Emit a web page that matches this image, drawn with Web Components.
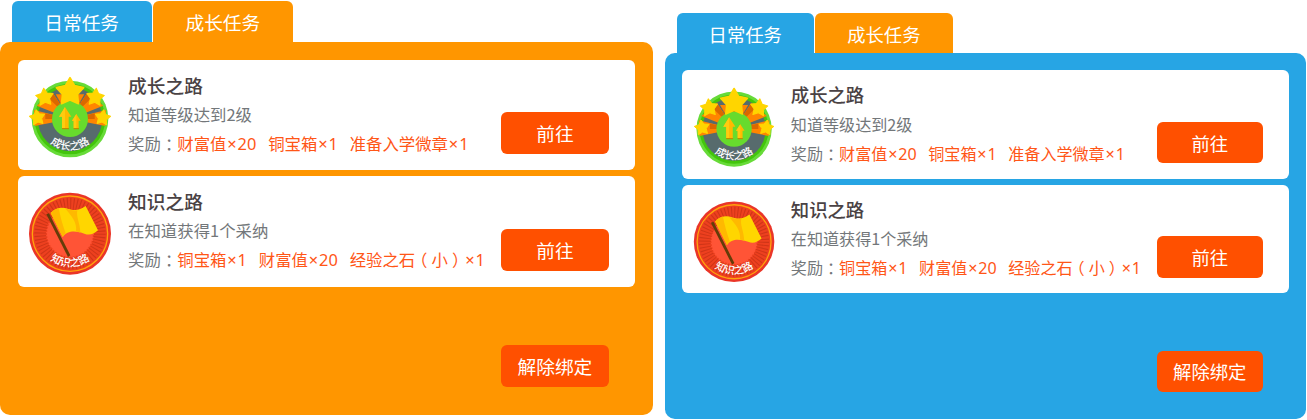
<!DOCTYPE html>
<html lang="zh-CN">
<head>
<meta charset="utf-8">
<title>任务</title>
<style>
body{margin:0;background:#fff;font-family:"Noto Sans CJK SC",sans-serif;width:1307px;height:420px;overflow:hidden}
main{display:flex;align-items:flex-start;gap:12.3px}
.daily{--u:.9816px;--theme:#27a5e4;margin-top:13px}
.growth{--u:1px;--theme:#ff9600;margin-top:1px}
</style>
</head>
<body>
<main>
  <task-board class="growth"></task-board>
  <task-board class="daily"></task-board>
</main>
<script>
function define(name, html) {
  const t = document.createElement('template');
  t.innerHTML = html;
  customElements.define(name, class extends HTMLElement {
    constructor() {
      super();
      this.attachShadow({mode: 'open'}).append(t.content.cloneNode(true));
    }
  });
}

define('task-tab', `
<style>
:host{display:flex;justify-content:center;align-items:center;box-sizing:border-box;width:calc(140*var(--u));height:calc(41*var(--u));padding-top:calc(1.4*var(--u));border-radius:calc(6*var(--u)) calc(6*var(--u)) 0 0;background:#27a5e4;color:#fff;font-size:calc(18.7*var(--u));line-height:1}
:host([kind=growth]){background:#ff9600}
</style><slot></slot>`);

define('task-button', `
<style>
:host{display:block;flex:none}
button{display:flex;align-items:center;justify-content:center;width:calc(107.4*var(--u));height:calc(42*var(--u));padding:calc(1*var(--u)) 0 0;border:0;border-radius:calc(6*var(--u));background:#ff5000;color:#fff;font-family:inherit;font-size:calc(18.7*var(--u));line-height:1}
</style><button><slot></slot></button>`);

define('reward-item', `
<style>
:host{display:block;white-space:nowrap;color:#ff5617}
.x{display:inline-block;width:.68em;text-align:center;font-family:"Noto Sans",sans-serif}
.n{font-family:"Noto Sans",sans-serif}
</style><slot></slot><span class="x">×</span><span class="n"><slot name="count"></slot></span>`);

define('growth-badge', `
<style>:host,svg{display:block}svg{width:calc(100*var(--u));height:calc(100*var(--u))}</style>
<svg viewBox="0 0 300 300">
  <defs>
    <path id="star" d="M0-10 3.2-4.4 9.5-3.1 5.2 1.7 5.9 8.1 0 5.5-5.9 8.1-5.2 1.7-9.5-3.1-3.2-4.4Z" stroke-width="1.2" stroke-linejoin="round"/>
    <path id="arc" d="M58 148A92 92 0 0 0 242 148"/>
  </defs>
  <circle cx="150" cy="147" r="115" fill="#67db38"/>
  <circle cx="150" cy="147" r="106" fill="#43c50c"/>
  <circle cx="150" cy="147" r="97" fill="#576b6d"/>
  <g fill="#ff8500">
    <path d="M150 147 107 73 193 73Z"/>
    <path d="M150 147 50 107 98 68Z"/>
    <path d="M150 147 202 68 250 107Z"/>
    <path d="M150 147 44 168 42 120Z"/>
    <path d="M150 147 258 120 256 168Z"/>
  </g>
  <g fill="#da6800">
    <path d="M150 147 107 73 123 104 150 92 177 104 193 73Z"/>
    <path d="M150 147 82 80 98 68Z"/>
    <path d="M150 147 202 68 218 80Z"/>
    <path d="M150 147 76 130 76 147Z"/>
    <path d="M150 147 224 130 224 147Z"/>
  </g>
  <circle cx="150" cy="147" r="54" fill="#67db2d"/>
  <g fill="#ffd500" stroke="#ffd500">
    <use href="#star" transform="translate(150 66) scale(4.3)"/>
    <use href="#star" transform="translate(74 82) rotate(-6) scale(2.75)"/>
    <use href="#star" transform="translate(226 82) rotate(6) scale(2.75)"/>
    <use href="#star" transform="translate(52 143) rotate(-8) scale(2.4)"/>
    <use href="#star" transform="translate(248 143) rotate(8) scale(2.4)"/>
  </g>
  <path d="M126 174H147V178H126ZM161 174H177V178H161Z" fill="#bf8b00"/>
  <path d="M135 111 154 140H146V174H126V140H117ZM169 132 182 152H176V174H161V152H156Z" fill="#ffb900"/>
  <path d="M135 111V174H126V140H117ZM169 132V174H161V152H156Z" fill="#ffcb10"/>
  <text fill="#fff" font-size="32" font-weight="500" text-anchor="middle"><textPath href="#arc" startOffset="50%">成长之路</textPath></text>
</svg>`);

define('knowledge-badge', `
<style>:host,svg{display:block}svg{width:calc(100*var(--u));height:calc(100*var(--u))}</style>
<svg viewBox="0 0 300 300">
  <defs><path id="arc" d="M52 150A98 98 0 0 0 248 150"/></defs>
  <circle cx="150" cy="149" r="123" fill="#ea3528"/>
  <circle cx="150" cy="149" r="113" fill="#ed401f" stroke="#ffa30d" stroke-width="4"/>
  <circle cx="150" cy="149" r="89" fill="none" stroke="#cf3518" stroke-width="36" stroke-dasharray="3 6.32"/>
  <circle cx="150" cy="149" r="69" fill="#ff5436"/>
  <circle cx="150" cy="149" r="69" fill="none" stroke="#ff5436" stroke-width="5" stroke-dasharray="4 5.03"/>
  <path d="M92 87C108 70 127 69 143 74C163 81 178 80 197 66L234 139C221 151 208 155 193 149C170 141 143 137 128 159Z" fill="#ffd600"/>
  <path d="M92 87C99 79 107 74 116 72C121 99 128 123 137 148L128 159ZM135 73C156 79 162 81 172 79C168 100 180 116 181 146L168 142C172 115 154 96 135 73Z" fill="#ffb900"/>
  <path d="M79 91 87 88 151 214 144 219Z" fill="#653c08"/>
  <text fill="#fff" font-size="32" font-weight="500" text-anchor="middle"><textPath href="#arc" startOffset="50%">知识之路</textPath></text>
</svg>`);

define('task-card', `
<style>
:host{display:flex;align-items:flex-start;box-sizing:border-box;height:calc(110.6*var(--u));padding:0 calc(26.6*var(--u)) 0 calc(2.5*var(--u));border-radius:calc(6*var(--u));background:#fff}
.badge{margin-top:var(--badge-top);width:calc(108*var(--u));flex:none}
.text{flex:1;min-width:0;padding-top:calc(12*var(--u));font-size:calc(16.4*var(--u));line-height:calc(29*var(--u));color:#73777a}
h3{margin:0 0 calc(3.4*var(--u));font-size:calc(18.7*var(--u));font-weight:500;line-height:calc(25*var(--u));color:#4a4244}
p{margin:0}
.rewards{display:flex;white-space:nowrap}
.colon{display:inline-block;width:1em;text-align:center;font-feature-settings:"halt"}
.list{display:flex;gap:calc(11.8*var(--u))}
.action{margin-top:calc(52.5*var(--u))}
</style>
<div class="badge"><slot name="badge"></slot></div>
<div class="text">
  <h3><slot name="title"></slot></h3>
  <p class="desc"><slot name="desc"></slot></p>
  <div class="rewards"><span>奖励<span class="colon">：</span></span><div class="list"><slot></slot></div></div>
</div>
<div class="action"><task-button>前往</task-button></div>`);

define('task-board', `
<style>
:host{display:block;width:calc(652.8*var(--u));flex:none}
nav{display:flex;gap:calc(1.2*var(--u));padding-left:calc(11.7*var(--u))}
.panel{box-sizing:border-box;height:calc(373*var(--u));padding:calc(17.5*var(--u)) calc(17.6*var(--u)) 0;border-radius:calc(10*var(--u));background:var(--theme)}
.cards{display:flex;flex-direction:column;gap:calc(6*var(--u))}
task-card{--badge-top:calc(10.5*var(--u))}
task-card+task-card{--badge-top:calc(8*var(--u))}
footer{display:flex;justify-content:flex-end;padding:calc(58.2*var(--u)) calc(26.6*var(--u)) 0}
.paren{display:inline-block;width:1em;text-align:center;font-feature-settings:"halt"}
</style>
<nav><task-tab>日常任务</task-tab><task-tab kind="growth">成长任务</task-tab></nav>
<section class="panel">
  <div class="cards">
    <task-card>
      <growth-badge slot="badge"></growth-badge>
      <span slot="title">成长之路</span>
      <span slot="desc">知道等级达到2级</span>
      <reward-item>财富值<span slot="count">20</span></reward-item>
      <reward-item>铜宝箱<span slot="count">1</span></reward-item>
      <reward-item>准备入学微章<span slot="count">1</span></reward-item>
    </task-card>
    <task-card>
      <knowledge-badge slot="badge"></knowledge-badge>
      <span slot="title">知识之路</span>
      <span slot="desc">在知道获得1个采纳</span>
      <reward-item>铜宝箱<span slot="count">1</span></reward-item>
      <reward-item>财富值<span slot="count">20</span></reward-item>
      <reward-item>经验之石<span class="paren">（</span>小<span class="paren">）</span><span slot="count">1</span></reward-item>
    </task-card>
  </div>
  <footer><task-button>解除绑定</task-button></footer>
</section>`);
</script>
</body>
</html>
